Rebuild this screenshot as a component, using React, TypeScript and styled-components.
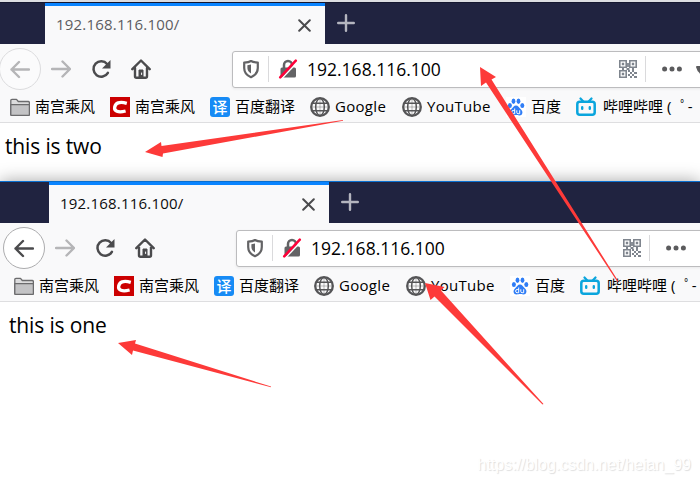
import React from "react";
import styled, { createGlobalStyle } from "styled-components";

const Global = createGlobalStyle`
  * { box-sizing: border-box; }
  body { margin: 0; background: #fff; overflow: hidden; }
`;

const Screen = styled.main`
  position: relative;
  width: 700px;
  height: 483px;
  overflow: hidden;
  background: #fff;
  color: #000;
  font-family: "Open Sans", "Noto Sans CJK SC", sans-serif;
`;

const Browser = styled.section<{ $height: number; $front?: boolean }>`
  display: flex;
  flex-direction: column;
  position: relative;
  height: ${(p) => p.$height}px;
  border-top: ${(p) => (p.$front ? "1px solid #0a6fd0" : "2px solid #dcdde1")};
  background: #fff;
  box-shadow: ${(p) => (p.$front ? "0 0 16px rgba(0,0,0,.36)" : "none")};
`;

const TabStrip = styled.div<{ $front?: boolean }>`
  display: flex;
  flex: none;
  height: ${(p) => (p.$front ? 41 : 42)}px;
  padding-left: ${(p) => (p.$front ? 49 : 45)}px;
  border-top: ${(p) => (p.$front ? "none" : "1px solid #15172f")};
  background: #202340;
`;

const Tab = styled.div<{ $front?: boolean }>`
  display: flex;
  align-items: center;
  justify-content: space-between;
  width: 280px;
  padding: 0 14px 0 11px;
  border-top: 3px solid #0a84ff;
  background: #f9f9fa;
  color: ${(p) => (p.$front ? "#0c0c0d" : "#5c5c61")};
`;

const TabTitle = styled.span`
  padding-bottom: 3px;
  font-size: 15px;
  line-height: 20px;
  letter-spacing: 0.2px;
`;

const NewTab = styled.div`
  display: flex;
  align-items: center;
  padding: 0 0 1px 12px;
`;

const Toolbar = styled.div<{ $front?: boolean }>`
  display: flex;
  flex: none;
  align-items: center;
  height: 50px;
  padding-left: ${(p) => (p.$front ? 3 : -1)}px;
  background: #f9f9fa;
`;

const NavButtons = styled.div<{ $front?: boolean }>`
  display: flex;
  flex: none;
  align-items: center;
  width: 233px;
  margin-left: ${(p) => (p.$front ? 0 : -1)}px;
`;

const BackButton = styled.div<{ $front?: boolean }>`
  display: grid;
  place-items: center;
  width: 42px;
  height: 42px;
  border: 1px solid ${(p) => (p.$front ? "#acacae" : "#dcdcde")};
  border-radius: 50%;
  background: ${(p) => (p.$front ? "#fff" : "#fbfbfc")};
`;

const NavButton = styled.div<{ $width: number }>`
  display: grid;
  place-items: center;
  width: ${(p) => p.$width}px;
  height: 40px;
`;

const AddressBar = styled.div`
  display: flex;
  flex: none;
  align-items: center;
  width: 500px;
  height: 37px;
  padding-left: 8px;
  border: 1px solid #bcbcbe;
  border-radius: 3px;
  background: #fff;
  box-shadow: 0 1px 3px rgba(0, 0, 0, 0.07);
`;

const Divider = styled.i<{ $left: number; $right: number }>`
  width: 1px;
  height: 26px;
  margin: 0 ${(p) => p.$right}px 0 ${(p) => p.$left}px;
  background: #dadadc;
`;

const Address = styled.span`
  width: 312px;
  margin-left: 9px;
  font-size: 17.5px;
  line-height: 24px;
  white-space: nowrap;
`;

const Bookmarks = styled.div<{ $front?: boolean }>`
  display: flex;
  flex: none;
  align-items: center;
  gap: 15px;
  height: 29px;
  padding: 0 0 3px ${(p) => (p.$front ? 14 : 10)}px;
  border-bottom: 1px solid #dedee0;
  background: #f9f9fa;
  overflow: hidden;
`;

const Bookmark = styled.div`
  display: flex;
  flex: none;
  align-items: center;
  gap: 5px;
`;

const BookmarkLabel = styled.span<{ $width: number; $latin?: boolean }>`
  width: ${(p) => p.$width}px;
  padding-bottom: 2px;
  font-size: 15px;
  line-height: 20px;
  white-space: nowrap;
  letter-spacing: ${(p) => (p.$latin ? "0.3px" : "0")};
`;

const BiliLabel = styled.span`
  padding-left: 2px;
`;

const Face = styled.span`
  margin-left: 4px;
  word-spacing: 5px;
`;

const Tile = styled.span<{ $bg: string; $radius: number }>`
  display: grid;
  place-items: center;
  width: 20px;
  height: 20px;
  border-radius: ${(p) => p.$radius}px;
  background: ${(p) => p.$bg};
  color: #fff;
  font: 500 15px/20px "Noto Sans CJK SC", sans-serif;
`;

const Page = styled.p<{ $front?: boolean }>`
  margin: 0;
  padding: 8px 0 0 ${(p) => (p.$front ? 9 : 5)}px;
  font-size: 21px;
  line-height: 30px;
  letter-spacing: -0.15px;
`;

const Overlay = styled.svg`
  position: absolute;
  inset: 0;
  pointer-events: none;
`;

const Watermark = styled.span`
  position: absolute;
  right: 9px;
  bottom: 8px;
  color: #fff;
  font: 16px/20px "Liberation Sans", sans-serif;
  text-shadow: 1px 1px 1px #dedede;
`;

const ArrowLeft = ({ color }: { color: string }) => (
  <svg width="20" height="20" viewBox="0 0 20 20" fill="none" stroke={color} strokeWidth="2.4" strokeLinecap="round" strokeLinejoin="round">
    <path d="M19 10.500H1.500M9 3 1.500 10.500 9 18" />
  </svg>
);

const ArrowRight = () => (
  <svg width="20" height="20" viewBox="0 0 20 20" fill="none" stroke="#b5b5b7" strokeWidth="2.4" strokeLinecap="round" strokeLinejoin="round">
    <path d="M1 10h17.500M11.500 2.500 19 10l-7.500 7.500" />
  </svg>
);

const Reload = () => (
  <svg width="20" height="20" viewBox="0 0 20 20" fill="none" stroke="#4b4b4d" strokeWidth="2.500" strokeLinecap="round">
    <path d="M16.900 13.800A7.700 7.700 0 1 1 16.100 5" />
    <path d="M19.500 1v8.500h-8.500z" fill="#4b4b4d" stroke="none" />
  </svg>
);

const Home = () => (
  <svg width="20" height="20" viewBox="0 0 20 20" fill="none" stroke="#4b4b4d" strokeWidth="2.400" strokeLinecap="round" strokeLinejoin="round">
    <path d="M1.300 10.200 10 1.500l8.700 8.700M4 9v8.300q0 1.500 1.500 1.500h9q1.500 0 1.500-1.500V9" />
    <path d="M8 18v-7h4v7z" fill="#4b4b4d" strokeWidth="1" />
    <path d="M10.600 14v1.500" stroke="#fff" strokeWidth="1" />
  </svg>
);

const Close = () => (
  <svg width="13" height="13" viewBox="0 0 13 13" stroke="#4b4b4d" strokeWidth="2" strokeLinecap="round">
    <path d="m1.200 1.200 10.600 10.600M11.800 1.200 1.200 11.800" />
  </svg>
);

const Plus = () => (
  <svg width="18" height="18" viewBox="0 0 18 18" stroke="#b4b5bf" strokeWidth="2.400" strokeLinecap="round">
    <path d="M9 1.200v15.600M1.200 9h15.600" />
  </svg>
);

const Shield = () => (
  <svg width="20" height="20" viewBox="0 0 20 20" fill="none">
    <path d="M10 2c2 1.200 4 1.400 6.800 1.600V9c0 4.300-2.300 7.300-6.800 9.200C5.500 16.300 3.200 13.300 3.200 9V3.600C6 3.400 8 3.200 10 2Z" stroke="#636365" strokeWidth="2.200" strokeLinejoin="round" />
    <path d="M10 5.500v9C7.500 13 6.400 11.300 6.400 9V6.200Z" fill="#636365" />
  </svg>
);

const Lock = () => (
  <svg width="20" height="20" viewBox="0 0 20 20" fill="none">
    <path d="M6 9.500V6a4 4 0 0 1 8 0v3.500" stroke="#636365" strokeWidth="2.500" />
    <rect x="2.500" y="8.500" width="15.500" height="10" rx="1.500" fill="#636365" />
    <path d="M3.800 19.500 19 3.400" stroke="#fff" strokeWidth="1.500" />
    <path d="M2.200 18.300 17.800 1.700" stroke="#ff0039" strokeWidth="2.500" strokeLinecap="round" />
  </svg>
);

const QrCode = () => (
  <svg width="18" height="18" viewBox="0 0 18 18" fill="none" stroke="#7f858e" strokeWidth="1.600">
    <path d="M.8.8h6.400v6.400H.8zM10.800.8h6.400v6.400h-6.400zM.8 10.800h6.400v6.400H.8z" />
    <path d="M2.800 4h2.400M12.800 4h2.400M2.800 14h2.400" strokeWidth="2.400" />
    <path d="M9 3v4M3 9h2M7.500 9h3M13 9h2" strokeWidth="1.800" />
    <path d="M9 11h2M13 11h2M11 13h2M15 13h3M9 15h2M13 15h2M11 17h2M15 17h3" strokeWidth="2" />
  </svg>
);

const Dots = () => (
  <svg width="20" height="6" viewBox="0 0 20 6" fill="#5b5b5d">
    <circle cx="2.600" cy="3" r="2.500" />
    <circle cx="10" cy="3" r="2.500" />
    <circle cx="17.400" cy="3" r="2.500" />
  </svg>
);

const Pocket = styled.svg`
  margin-left: 14px;
`;

const Folder = () => (
  <svg width="20" height="20" viewBox="0 0 20 20" stroke="#6b6b6d" strokeWidth="1.300" strokeLinejoin="round">
    <path d="M.8 17.500v-14Q.8 2.300 2 2.300h4.500L8.300 4.500h9.900q1.200 0 1.200 1.200v11.800q0 .9-1 .9H1.800q-1 0-1-.9Z" fill="#dcdcdd" />
    <path d="M.8 7.700h18.600v9.800q0 .9-1 .9H1.800q-1 0-1-.9Z" fill="#c3c3c5" />
  </svg>
);

const CLogo = () => (
  <svg width="20" height="20" viewBox="0 0 20 20">
    <path d="M0 0h20v20H0z" fill="#c00" />
    <path d="M16.800 6.300C9 4 5.600 6.200 4.700 10c-.8 4 3 6 10.900 4" fill="none" stroke="#fff" strokeWidth="3.300" />
  </svg>
);

const Globe = () => (
  <svg width="20" height="20" viewBox="0 0 20 20" fill="none" stroke="#555557">
    <circle cx="10" cy="10" r="8.800" strokeWidth="2.300" />
    <ellipse cx="10" cy="10" rx="4.300" ry="8.500" strokeWidth="1.500" />
    <path d="M2.500 6.200h15M2.500 13.800h15" strokeWidth="1.500" />
    <path d="M10 1.500v17M1.500 10h17" strokeWidth=".4" />
  </svg>
);

const Paw = () => (
  <svg width="20" height="20" viewBox="0 0 20 20" fill="#2f7df6">
    <path d="M0 0h20v20H0z" fill="#fff" />
    <ellipse cx="3.900" cy="8.500" rx="2" ry="2.600" />
    <ellipse cx="7.500" cy="4.300" rx="1.900" ry="2.700" />
    <ellipse cx="12.500" cy="4.300" rx="1.900" ry="2.700" />
    <ellipse cx="16.300" cy="8.500" rx="2" ry="2.600" />
    <path d="M10 8.500c2.200 0 2.800 2 5 4 2.600 2.300 1.400 6-1.500 6-2 0-2.200-.4-3.500-.4s-1.500.4-3.500.4c-2.900 0-4.100-3.700-1.500-6 2.200-2 2.800-4 5-4Z" />
    <path d="M8.700 11.500v5.200H7.200a1.500 1.500 0 0 1 0-3.200h1.500M10.800 13.300v2.200q0 1.200 1.300 1.200h1.600v-3.400" fill="none" stroke="#fff" strokeWidth="1" />
  </svg>
);

const Bili = () => (
  <svg width="20" height="20" viewBox="0 0 20 20" fill="none" stroke="#0aa5dd" strokeLinecap="round">
    <path d="m4.500 1.500 2.800 3M15.500 1.500l-2.800 3" strokeWidth="2.200" />
    <rect x="1.300" y="4.800" width="17.400" height="13" rx="2.500" strokeWidth="2.500" />
    <path d="M6.200 10.200v1.600M13.800 10.200v1.600" strokeWidth="2.400" />
  </svg>
);

const BookmarkItem = ({ icon, width, latin, children }: { icon: React.ReactNode; width: number; latin?: boolean; children: React.ReactNode }) => (
  <Bookmark>
    {icon}
    <BookmarkLabel $width={width} $latin={latin}>{children}</BookmarkLabel>
  </Bookmark>
);

function BrowserWindow({ height, front, message }: { height: number; front?: boolean; message: string }) {
  return (
    <Browser $height={height} $front={front}>
      <TabStrip $front={front}>
        <Tab $front={front}>
          <TabTitle>192.168.116.100/</TabTitle>
          <Close />
        </Tab>
        <NewTab><Plus /></NewTab>
      </TabStrip>
      <Toolbar $front={front}>
        <NavButtons $front={front}>
          <BackButton $front={front}><ArrowLeft color={front ? "#4b4b4d" : "#b5b5b7"} /></BackButton>
          <NavButton $width={40}><ArrowRight /></NavButton>
          <NavButton $width={40}><Reload /></NavButton>
          <NavButton $width={40}><Home /></NavButton>
        </NavButtons>
        <AddressBar>
          <Shield />
          <Divider $left={7} $right={9} />
          <Lock />
          <Address>192.168.116.100</Address>
          <QrCode />
          <Divider $left={8} $right={16} />
          <Dots />
          <Pocket width="18" height="18" viewBox="0 0 18 18"><path d="M0 7q0-1 1-1h16q1 0 1 1-2 8-9 8T0 7Z" fill="#5b5b5d" /></Pocket>
        </AddressBar>
      </Toolbar>
      <Bookmarks $front={front}>
        <BookmarkItem icon={<Folder />} width={60}>南宫乘风</BookmarkItem>
        <BookmarkItem icon={<CLogo />} width={60}>南宫乘风</BookmarkItem>
        <BookmarkItem icon={<Tile $bg="#178bf5" $radius={3}>译</Tile>} width={60}>百度翻译</BookmarkItem>
        <BookmarkItem icon={<Globe />} width={52} latin>Google</BookmarkItem>
        <BookmarkItem icon={<Globe />} width={64} latin>YouTube</BookmarkItem>
        <BookmarkItem icon={<Paw />} width={30}>百度</BookmarkItem>
        <BookmarkItem icon={<Bili />} width={140}><BiliLabel>哔哩哔哩<Face>( ﾟ-</Face></BiliLabel></BookmarkItem>
      </Bookmarks>
      <Page $front={front}>{message}</Page>
    </Browser>
  );
}

export default function App() {
  return (
    <Screen>
      <Global />
      <BrowserWindow height={181} message="this is two" />
      <BrowserWindow height={302} front message="this is one" />
      <Overlay width="700" height="483" viewBox="0 0 700 483" fill="#fd3a39">
        <path d="M145 152 161 142 161.500 146 343 120 343 120.700 163 153.500 162.500 157Z" />
        <path d="M118 343 136 340 135 343.500 271 386.500 271 387.200 133 350.500 132 355Z" />
        <path d="M480 67 496 77 491.500 79.500 618.500 281.500 617.500 282 486 82.500 481 86Z" />
        <path d="M425 283 444.500 287 441 290.500 543.500 404 542.500 404.500 434.500 296.500 430.500 300Z" />
      </Overlay>
      <Watermark>https://blog.csdn.net/heian_99</Watermark>
    </Screen>
  );
}
